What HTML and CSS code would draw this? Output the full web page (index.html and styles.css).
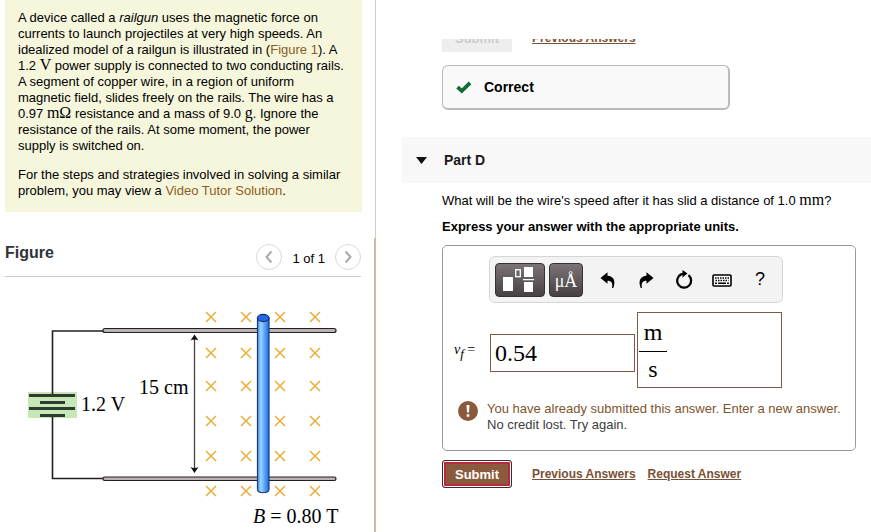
FILE: index.html
```
<!DOCTYPE html>
<html lang="en">
<head>
  <meta charset="UTF-8">
  <meta name="viewport" content="width=device-width, initial-scale=1.0">
  <title>Railgun - Part D</title>
  <link rel="stylesheet" href="styles.css">
</head>
<body>
  <div class="page">
    <aside class="left">
      <section class="problem">
        <div class="problem-text">
          <p>A device called a <em>railgun</em> uses the magnetic force on currents to launch projectiles at very high speeds. An idealized model of a railgun is illustrated in (<a href="#figure">Figure 1</a>). A 1.2&nbsp;<span class="unit">V</span> power supply is connected to two conducting rails. A segment of copper wire, in a region of uniform magnetic field, slides freely on the rails. The wire has a 0.97&nbsp;<span class="unit">mΩ</span> resistance and a mass of 9.0&nbsp;<span class="unit">g</span>. Ignore the resistance of the rails. At some moment, the power supply is switched on.</p>
          <p>For the steps and strategies involved in solving a similar problem, you may view a <a href="#video">Video Tutor Solution</a>.</p>
        </div>
      </section>
      <section class="figure" id="figure">
        <div class="figure-header">
          <h2>Figure</h2>
          <div class="pager">
            <button type="button" aria-label="Previous figure">
              <svg width="24" height="24" viewBox="0 0 24 24"><path d="M14.500 6.500L9.500 12l5 5.500"/></svg>
            </button>
            <span>1 of 1</span>
            <button type="button" aria-label="Next figure">
              <svg width="24" height="24" viewBox="0 0 24 24"><path d="M9.500 6.500l5 5.500-5 5.500"/></svg>
            </button>
          </div>
        </div>
        <svg class="diagram" viewBox="0 0 340 226" role="img" aria-label="Railgun circuit">
          <defs>
            <linearGradient id="rod" x1="0" x2="1" y1="0" y2="0">
              <stop offset="0" stop-color="#3f8ff0"/>
              <stop offset="0.3" stop-color="#a5d3ff"/>
              <stop offset="0.6" stop-color="#5aa6fb"/>
              <stop offset="1" stop-color="#1f6be0"/>
            </linearGradient>
            <path id="x" d="M-5-5L5 5M5-5L-5 5" stroke="#e9ae37" stroke-width="1.500" fill="none"/>
          </defs>
          <!-- magnetic field into the page -->
          <g>
            <use href="#x" x="206" y="11"/><use href="#x" x="241" y="11"/><use href="#x" x="275" y="11"/><use href="#x" x="310" y="11"/>
            <use href="#x" x="206" y="47"/><use href="#x" x="241" y="47"/><use href="#x" x="275" y="47"/><use href="#x" x="310" y="47"/>
            <use href="#x" x="206" y="80"/><use href="#x" x="241" y="80"/><use href="#x" x="275" y="80"/><use href="#x" x="310" y="80"/>
            <use href="#x" x="206" y="115"/><use href="#x" x="241" y="115"/><use href="#x" x="275" y="115"/><use href="#x" x="310" y="115"/>
            <use href="#x" x="206" y="150"/><use href="#x" x="241" y="150"/><use href="#x" x="275" y="150"/><use href="#x" x="310" y="150"/>
            <use href="#x" x="206" y="185"/><use href="#x" x="241" y="185"/><use href="#x" x="275" y="185"/><use href="#x" x="310" y="185"/>
          </g>
          <!-- battery and wires -->
          <rect x="23" y="86" width="49" height="26" fill="#c4e8b8"/>
          <path d="M98 25H47.500V89M47.500 110v62.500H98" fill="none" stroke="#231f20" stroke-width="1.600"/>
          <path d="M24 89.500h46M24 102.500h46M35 96.500h25M35 109.500h25" stroke="#303a30" stroke-width="2.800"/>
          <!-- rails -->
          <rect x="98" y="22.500" width="233" height="4" rx="2" fill="#b9b3b8" stroke="#231f20" stroke-width="1.200"/>
          <rect x="98" y="171" width="233" height="3.500" rx="1.700" fill="#b9b3b8" stroke="#231f20" stroke-width="1.200"/>
          <!-- sliding wire -->
          <path d="M252.500 12v171c0 5 11.500 5 11.500 0V12z" fill="url(#rod)" stroke="#173d78" stroke-width="1.200"/>
          <ellipse cx="258.200" cy="12" rx="5.800" ry="3.600" fill="#2467e8" stroke="#12306b" stroke-width="1.200"/>
          <!-- separation -->
          <path d="M189.500 32V164" stroke="#444" stroke-width="1.300"/>
          <path d="M189.500 28.500l4 6q-4-2-8 0zM189.500 167l4-6q-4 2-8 0z" fill="#111"/>
          <text x="134" y="88">15 cm</text>
          <text x="76" y="105">1.2 V</text>
          <text x="248" y="217"><tspan font-style="italic">B</tspan> = 0.80 T</text>
        </svg>
      </section>
    </aside>

    <main class="right">
      <div class="scrolled">
        <div class="actions">
          <button type="button" class="submit" disabled>Submit</button>
          <a href="#previous-c">Previous Answers</a>
        </div>
      </div>

      <div class="correct">
        <svg width="16" height="14" viewBox="0 0 16 14"><path d="M1.500 7.200L5.800 11 14 2.800" fill="none" stroke="#0e6e32" stroke-width="3.800"/></svg>
        Correct
      </div>

      <h2 class="part">
        <svg width="11" height="7" viewBox="0 0 11 7"><path d="M0 0h11L5.500 7z" fill="#111"/></svg>
        Part D
      </h2>

      <form class="question">
        <p>What will be the wire's speed after it has slid a distance of 1.0&nbsp;<span class="unit">mm</span>?</p>
        <p><strong>Express your answer with the appropriate units.</strong></p>

        <div class="answer-box">
          <div class="toolbar">
            <button type="button" class="dark template" aria-label="Templates">
              <svg width="34" height="28" viewBox="0 0 34 28">
                <path d="M0 11h10v14H0zM21 1h9v10h-9zM21 16h9v10h-9zM20 13h11v1.300H20z" fill="#fff"/>
                <rect x="12.700" y="3.700" width="4.600" height="7" fill="none" stroke="#fff" stroke-width="1.300"/>
              </svg>
            </button>
            <button type="button" class="dark symbols">μÅ</button>
            <button type="button" class="tool" aria-label="Undo">
              <svg width="18" height="18" viewBox="0 0 18 18"><path d="M1.500 7L8.500 1.200V4.800C14 5 17.300 9.500 14.300 17H13C14 12 12.500 9.800 8.500 9.800V12.800z"/></svg>
            </button>
            <button type="button" class="tool" aria-label="Redo">
              <svg width="18" height="18" viewBox="0 0 18 18"><path d="M16.500 7L9.500 1.200V4.800C4 5 .7 9.500 3.700 17H5C4 12 5.500 9.800 9.500 9.800V12.800z"/></svg>
            </button>
            <button type="button" class="tool" aria-label="Reset">
              <svg width="20" height="20" viewBox="0 0 20 20"><path d="M14.500 5.200A7 7 0 1 1 7 4.400" fill="none" stroke="#000" stroke-width="2.300"/><path d="M8.500 0L13.500 3.500 8.500 7.500z"/><path d="M6.500 4.500L10 3.500" stroke="#000" stroke-width="2"/></svg>
            </button>
            <button type="button" class="tool" aria-label="Keyboard">
              <svg width="20" height="14" viewBox="0 0 20 14">
                <rect x="1" y="2" width="18" height="11" rx="1" fill="#fff" stroke="#000" stroke-width="1.600"/>
                <path d="M3 5h14M3.500 7.500h13" stroke="#000" stroke-width="1.500" stroke-dasharray="1.500 1"/>
                <path d="M3 10.300h2M6 10.300h8M15 10.300h2" stroke="#000" stroke-width="1.500"/>
              </svg>
            </button>
            <button type="button" class="tool help" aria-label="Help">?</button>
          </div>

          <div class="entry">
            <label for="value"><i>v<sub>f</sub></i> =</label>
            <input type="text" id="value" class="value" value="0.54">
            <div class="units">
              <input type="text" aria-label="Unit numerator" value="m">
              <input type="text" aria-label="Unit denominator" value="s">
            </div>
          </div>

          <div class="message">
            <svg width="20" height="20" viewBox="0 0 20 20"><circle cx="10" cy="10" r="10" fill="#8b5a3c"/><path d="M8.500 4h3L11 11.500H9zM8.700 13.200h2.600v2.600H8.700z" fill="#fff"/></svg>
            <p><span>You have already submitted this answer. Enter a new answer.</span><br>No credit lost. Try again.</p>
          </div>
        </div>

        <div class="actions">
          <button type="submit" class="submit">Submit</button>
          <a href="#previous-d">Previous Answers</a>
          <a href="#request">Request Answer</a>
        </div>
      </form>
    </main>
  </div>
</body>
</html>
```

FILE: styles.css
```
* {
  box-sizing: border-box;
}
body {
  margin: 0;
  font-family: "Liberation Sans", Arial, sans-serif;
  font-size: 13px;
  line-height: 16px;
  color: #000;
  background: #fff;
}
p, h2 {
  margin: 0;
}
button {
  font-family: inherit;
  padding: 0;
  cursor: pointer;
}
svg {
  display: block;
  flex: none;
}
.page {
  display: grid;
  grid-template-columns: minmax(376px, 43%) 1fr;
  min-height: 100vh;
}
.left {
  display: flex;
  flex-direction: column;
}
.problem {
  padding: 0 13px 26px 5px;
  border-right: 1px solid #d9cbbb;
}
.problem-text {
  padding: 10px 13px 13px;
  background: #f6f6dc;
}
.problem-text p + p {
  margin-top: 13px;
}
.problem-text a {
  color: #8b5e1e;
  text-decoration: none;
}
.unit {
  font-family: "Liberation Serif", serif;
  font-size: 16px;
  line-height: 1px;
}
.figure {
  flex: 1;
  padding: 0 13px 0 5px;
  border-right: 2px solid #d2baa0;
}
.figure-header {
  display: flex;
  justify-content: space-between;
  height: 39px;
  border-bottom: 1px solid #ccc;
}
.figure-header h2 {
  padding-top: 7px;
  font-size: 16px;
  color: #2e3338;
}
.pager {
  display: flex;
  gap: 10px;
  padding-top: 6px;
}
.pager span {
  padding-top: 7px;
}
.pager button {
  display: grid;
  place-items: center;
  width: 26px;
  height: 26px;
  border: 1px solid #d9d9d9;
  border-radius: 50%;
  background: #fff;
}
.pager path {
  fill: none;
  stroke: #aaa;
  stroke-width: 2;
}
.diagram {
  width: 340px;
  max-width: 100%;
  margin-top: 29px;
  font-family: "Liberation Serif", serif;
  font-size: 20px;
}

.right {
  padding: 39px 0 0 26px;
}
.scrolled {
  display: flex;
  align-items: flex-end;
  height: 13px;
  margin-left: 40px;
  overflow: hidden;
}
.actions {
  display: flex;
  align-items: center;
  gap: 12px;
}
.actions a {
  font-size: 12px;
  font-weight: bold;
  color: #7a5034;
}
.submit {
  width: 70px;
  height: 28px;
  margin-right: 8px;
  border: 1px solid #4a2530;
  border-radius: 3px;
  background: #8b5a3c;
  box-shadow: inset 0 0 0 1px #fff, inset 0 0 0 3px #b8293d;
  color: #fff;
  font-size: 13px;
  font-weight: bold;
}
.submit:disabled {
  border: none;
  border-radius: 0;
  background: #eee;
  box-shadow: none;
  color: #ccc;
}
.correct {
  display: flex;
  align-items: center;
  gap: 12px;
  max-width: 288px;
  height: 45px;
  margin: 13px 0 0 40px;
  padding: 0 13px;
  border: 1px solid #bbb;
  border-right-width: 2px;
  border-bottom-width: 2px;
  border-radius: 6px;
  background: #f9f9f9;
  font-size: 14px;
  font-weight: bold;
}
.part {
  display: flex;
  align-items: center;
  gap: 17px;
  height: 46px;
  margin-top: 27px;
  padding-left: 14px;
  background: #f8f8f8;
  color: #1a1a1a;
  font-size: 14px;
}
.question {
  padding: 10px 15px 0 40px;
}
.question > p {
  margin-bottom: 10px;
}
.answer-box {
  padding: 10px 11px 17px;
  border: 1px solid #999;
  border-radius: 5px;
}
.toolbar {
  display: flex;
  align-items: center;
  width: 294px;
  height: 47px;
  margin-left: 35px;
  padding: 0 3px 0 5px;
  border: 1px solid #d5d5d5;
  border-radius: 6px;
  background: #f3f3f3;
}
.dark {
  display: grid;
  place-items: center;
  height: 34px;
  margin-right: 4px;
  border: 1px solid #333;
  border-radius: 4px;
  background: linear-gradient(#7b7377, #474144);
  color: #fff;
}
.template {
  width: 50px;
}
.symbols {
  width: 34px;
  margin-right: 6px;
  padding-top: 3px;
  font-family: "Liberation Serif", serif;
  font-size: 18px;
}
.tool {
  display: grid;
  place-items: center;
  flex: 1;
  height: 34px;
  padding: 0;
  border: none;
  background: none;
}
.help {
  font-size: 18px;
}
.entry {
  display: flex;
  align-items: center;
  margin-top: 9px;
}
.entry label {
  width: 36px;
  font-family: "Liberation Serif", serif;
  font-size: 14px;
  white-space: nowrap;
}
.entry sub {
  font-size: 13px;
  line-height: 1px;
}
.entry input {
  font-family: "Liberation Serif", serif;
  font-size: 24px;
  background: #fff;
}
.value {
  width: 145px;
  height: 38px;
  margin-top: 6px;
  padding: 0 4px;
  border: 1px solid #7f5a47;
}
.units {
  display: flex;
  flex-direction: column;
  align-items: flex-start;
  width: 145px;
  height: 76px;
  margin-left: 2px;
  padding: 1px;
  border: 1px solid #7f5a47;
}
.units input {
  width: 28px;
  height: 37px;
  padding: 0;
  border: none;
  border-radius: 0;
  text-align: center;
}
.units input + input {
  height: 35px;
  border-top: 1px solid #000;
}
.message {
  display: flex;
  gap: 9px;
  margin-top: 13px;
  padding-left: 4px;
  color: #3c3c3c;
}
.message span {
  color: #7f542c;
}
.question .actions {
  margin-top: 9px;
}
```
